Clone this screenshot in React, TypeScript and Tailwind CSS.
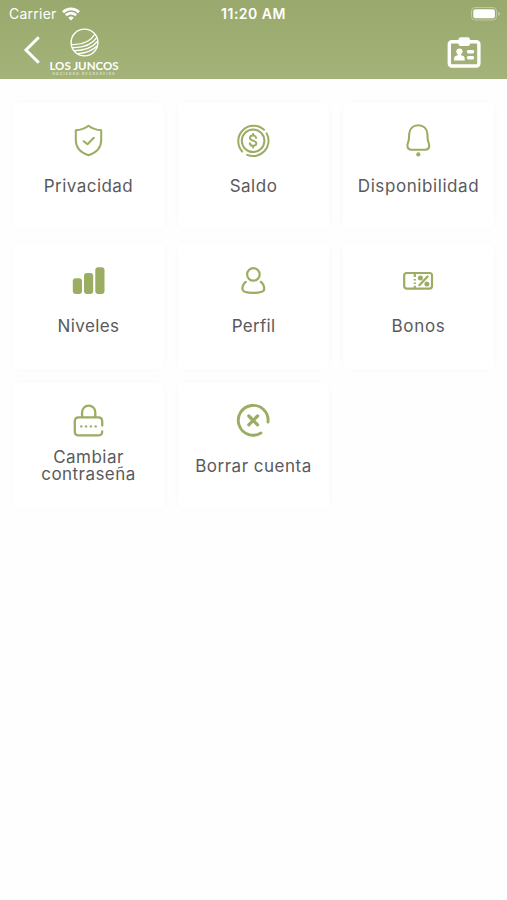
import React from 'react';

const ShieldIcon = () => (
    <svg className="size-9" viewBox="0 0 36 36" fill="none" stroke="currentColor" strokeWidth="2" strokeLinecap="round" strokeLinejoin="round">
        <path d="M18.5 2.7C15 5.4 10.5 7 5.8 7.2V17c0 7.6 5.4 12.9 12.7 15.2C25.8 29.9 31.2 24.6 31.2 17V7.2C26.5 7 22 5.4 18.5 2.7Z" />
        <path d="m13.7 18.2 3.8 3.1 6.3-6.5" />
    </svg>
);

const CoinIcon = () => (
    <svg className="size-9" viewBox="0 0 36 36" fill="none" stroke="currentColor" strokeWidth="2" strokeLinecap="round">
        <circle cx="18.1" cy="17.7" r="11.3" />
        <path d="M7.2 28.5A15.4 15.4 0 0 1 29 6.8" />
        <path d="M31.7 10.4A15.4 15.4 0 0 1 12.2 31.9" />
        <path d="M21.1 14.9c-.2-1.5-1.3-2.3-3-2.3s-3.1.9-3.1 2.4c0 3.4 6.3 1.9 6.3 5.3 0 1.6-1.3 2.5-3.2 2.5-1.8 0-3-.9-3.2-2.5M18.1 11v1.5M18.1 22.9v1.6" />
    </svg>
);

const BellIcon = () => (
    <svg className="size-9" viewBox="0 0 36 36" fill="none" stroke="currentColor" strokeWidth="2.1">
        <path d="M18.3 2.3c5.4 0 8.7 3.5 9.1 8.7l.3 5c.1 2.1 1.5 4.6 1.5 6.6 0 2.7-1.4 4.2-4.2 4.2H11.6c-2.8 0-4.2-1.5-4.2-4.2 0-2 1.4-4.5 1.5-6.6l.3-5c.4-5.2 3.7-8.7 9.1-8.7Z" />
        <circle cx="18.3" cy="31.4" r="2.1" fill="currentColor" stroke="none" />
    </svg>
);

const BarsIcon = () => (
    <svg className="size-9" viewBox="0 0 36 36" fill="currentColor">
        <rect x="2.8" y="15.3" width="9.2" height="15.7" rx="3" />
        <rect x="14" y="10" width="9.2" height="21" rx="3" />
        <rect x="25.3" y="4.3" width="9.2" height="26.7" rx="3" />
    </svg>
);

const PersonIcon = () => (
    <svg className="size-9" viewBox="0 0 36 36" fill="none" stroke="currentColor" strokeWidth="2.2" strokeLinecap="round">
        <circle cx="18.4" cy="11.4" r="6.3" />
        <path d="M10.8 18.9C8.4 20.7 7.4 23.4 7.4 26c0 2.9 4.6 3.9 10.9 3.9S29.2 28.9 29.2 26c0-2.6-1-5.3-3.4-7.1" />
    </svg>
);

const TicketIcon = () => (
    <svg className="size-9" viewBox="0 0 36 36" fill="none" stroke="currentColor" strokeWidth="2.2">
        <rect x="4.2" y="10" width="27.8" height="15.6" rx="2.5" />
        <path d="M14.8 10v4M14.8 16v1.6M14.8 19.4v1.6M14.8 22.8v2.8" />
        <path d="m19.4 22.2 8.2-8.8" strokeLinecap="round" />
        <circle cx="20.4" cy="15" r="2.5" fill="currentColor" stroke="none" />
        <circle cx="26.9" cy="20.9" r="2.5" fill="currentColor" stroke="none" />
    </svg>
);

const LockIcon = () => (
    <svg className="size-9" viewBox="0 0 36 36" fill="none" stroke="currentColor" strokeWidth="2.3" strokeLinecap="round">
        <path d="M12.1 14V9.2a6.6 6.6 0 0 1 13.2 0V14" />
        <path d="M32.2 22.6V18.4c0-2.6-1.4-4-4-4H8.8c-2.6 0-4 1.4-4 4v10c0 2.6 1.4 4 4 4h19.4c2.6 0 4-1.2 4-4" />
        <g fill="currentColor" stroke="none">
            <circle cx="11.3" cy="23.4" r="1.2" />
            <circle cx="16.1" cy="23.4" r="1.2" />
            <circle cx="20.9" cy="23.4" r="1.2" />
            <circle cx="25.7" cy="23.4" r="1.2" />
        </g>
    </svg>
);

const DeleteIcon = () => (
    <svg className="size-9" viewBox="0 0 36 36" fill="none" stroke="currentColor" strokeWidth="2.9" strokeLinecap="round">
        <path d="M26 30A14.9 14.9 0 1 1 33 19" />
        <path d="m13.8 13 8.8 8.8M22.6 13l-8.8 8.8" strokeWidth="3.2" />
    </svg>
);

const options = [
    { icon: ShieldIcon, label: 'Privacidad', labelClass: 'pt-0.5 tracking-[0.45px]' },
    { icon: CoinIcon, label: 'Saldo', labelClass: 'pt-0.5 tracking-[0.5px]' },
    { icon: BellIcon, label: 'Disponibilidad', labelClass: 'pt-0.5 tracking-[0.58px]' },
    { icon: BarsIcon, label: 'Niveles', labelClass: 'pt-0.5 tracking-[0.4px]' },
    { icon: PersonIcon, label: 'Perfil', labelClass: 'pt-0.5 tracking-[0.3px]' },
    { icon: TicketIcon, label: 'Bonos', labelClass: 'pt-0.5 tracking-[0.7px]' },
    { icon: LockIcon, label: 'Cambiar contraseña', labelClass: 'px-5 tracking-[0.45px]' },
    { icon: DeleteIcon, label: 'Borrar cuenta', labelClass: 'pt-0.5 tracking-[0.5px]' },
];

const StatusBar = () => (
    <div className="grid h-7 grid-cols-3 items-center pr-[6px] pl-[9px]">
        <div className="flex items-center gap-[5px]">
            <span className="text-sm tracking-[0.25px]">Carrier</span>
            <svg className="h-3.5 w-[18px]" viewBox="0 0 18 14" fill="none" stroke="currentColor" strokeWidth="2.7">
                <path d="M1 5.2a11.3 11.3 0 0 1 16 0" />
                <path d="M3.9 8.3a7.2 7.2 0 0 1 10.2 0" />
                <path d="M9 13.5 6.3 10.8a3.8 3.8 0 0 1 5.4 0Z" fill="currentColor" stroke="none" />
            </svg>
        </div>
        <span className="-ml-[3px] text-center text-sm font-semibold tracking-[0.5px]">11:20 AM</span>
        <svg className="h-3.5 w-[30px] justify-self-end" viewBox="0 0 30 14" fill="none">
            <rect x="0.5" y="0.5" width="25" height="12.5" rx="3.5" stroke="currentColor" strokeOpacity="0.35" />
            <rect x="2.3" y="2.2" width="21.6" height="9" rx="2" fill="currentColor" />
            <path d="M27.2 4.7c1.3.5 1.8 1.2 1.8 2.1s-.5 1.6-1.8 2.1Z" fill="currentColor" fillOpacity="0.4" />
        </svg>
    </div>
);

const Logo = () => (
    <div className="flex w-[70px] flex-col items-center">
        <svg className="size-[29px]" viewBox="0 0 29 29" fill="none" stroke="currentColor" strokeWidth="1.4">
            <circle cx="14.5" cy="14.5" r="13.4" />
            <path d="M1.3 16.5C12 17.2 20.5 13.4 25 6" />
            <path d="M2.4 19.6C13.8 20 22.5 15.8 27 9.4" />
            <path d="M4.2 22.7C14.5 22.6 23 19 28 13" />
            <path d="M7.3 25.6C15.5 25.4 22.6 22.4 27.4 17.8" />
        </svg>
        <span className="mt-[3px] font-['Lato',sans-serif] text-[11.5px] leading-[11px] font-bold whitespace-nowrap">LOS JUNCOS</span>
        <span className="mt-px text-[3.5px] leading-[4px] font-medium tracking-[1.2px] whitespace-nowrap opacity-80">SOCIEDAD RECREATIVA</span>
    </div>
);

const Header = () => (
    <header className="h-[79px] bg-linear-to-b from-[#99a96d] to-[#a4b379] text-white">
        <StatusBar />
        <div className="flex items-start pr-[26px] pl-[22px]">
            <button aria-label="Volver" className="mt-2">
                <svg className="h-7 w-5" viewBox="0 0 20 28" fill="none" stroke="currentColor" strokeWidth="3">
                    <path d="M16.8 1.3 4 14l12.8 12.7" />
                </svg>
            </button>
            <div className="ml-[7px]">
                <Logo />
            </div>
            <button aria-label="Carnet" className="mt-[9px] ml-auto">
                <svg className="h-[31px] w-[34px]" viewBox="0 0 34 31" fill="currentColor">
                    <rect x="2.3" y="4.7" width="29.6" height="24.3" rx="2.5" fill="none" stroke="currentColor" strokeWidth="3.4" />
                    <rect x="11.5" y="0.3" width="11.5" height="8.7" rx="2.5" />
                    <circle cx="12.4" cy="14.6" r="3.1" />
                    <path d="M10.8 16h3.2v2.2c2.4.4 3.7 1.5 3.7 3.1v2.2H7.1v-2.2c0-1.6 1.3-2.7 3.7-3.1Z" />
                    <rect x="19.8" y="13" width="7.4" height="3.4" rx="1.6" />
                    <rect x="19.8" y="19" width="7.4" height="3.4" rx="1.6" />
                </svg>
            </button>
        </div>
    </header>
);

const App: React.FC = () => (
    <div className="min-h-screen bg-[#fefefe] font-['Inter',sans-serif]">
        <Header />
        <main className="grid grid-cols-3 gap-3.5 px-[13px] pt-6">
            {options.map((option) => {
                const Icon = option.icon;
                return (
                    <button
                        key={option.label}
                        className="flex h-[126px] flex-col items-center gap-[9px] rounded-md bg-white pt-5 shadow-[0_0_8px_rgba(0,0,0,0.022)]"
                    >
                        <span className="-ml-px text-[#9aad62]">
                            <Icon />
                        </span>
                        <span className={`flex h-9 items-center justify-center text-center text-[17px] leading-[17.5px] text-[#5a5a5c] ${option.labelClass}`}>
                            {option.label}
                        </span>
                    </button>
                );
            })}
        </main>
    </div>
);

export default App;
